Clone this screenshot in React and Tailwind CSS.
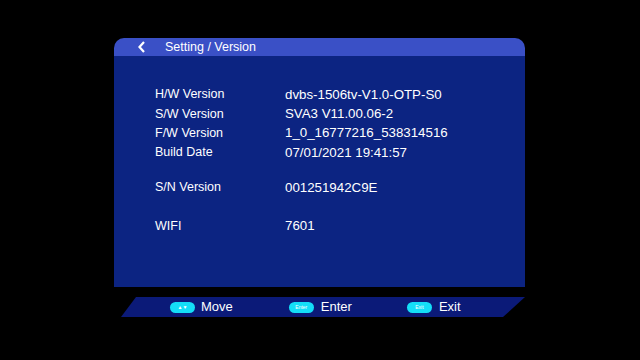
export default function App() {
  const rows = [
    ["H/W Version", "dvbs-1506tv-V1.0-OTP-S0", "mt-0"],
    ["S/W Version", "SVA3 V11.00.06-2", "mt-0"],
    ["F/W Version", "1_0_16777216_538314516", "mt-0"],
    ["Build Date", "07/01/2021 19:41:57", "mt-0"],
    ["S/N Version", "001251942C9E", "mt-[16px]"],
    ["WIFI", "7601", "mt-[19px]"],
  ];
  return (
    <div className="w-[640px] h-[360px] bg-black overflow-hidden relative" style={{ fontFamily: '"Liberation Sans", Arial, sans-serif' }}>
      <div className="absolute left-[114px] top-[38px] w-[411px] flex flex-col">
        <div className="h-[18px] bg-[#3a50c6] rounded-t-[10px] flex items-center">
          <svg width="10" height="14" viewBox="0 0 10 14" className="ml-[23px]">
            <path d="M7 2 L2.5 7 L7 12" stroke="white" strokeWidth="2.2" fill="none" />
          </svg>
          <span className="ml-[18px] text-white text-[12.5px] leading-none">Setting / Version</span>
        </div>
        <div className="h-[231px] bg-[#0c2482] pt-[29px] pl-[41px] text-white text-[12.5px]">
          {rows.map(([k, v, m]) => (
            <div key={k} className={`flex h-[19.3px] items-center ${m}`}>
              <span className="w-[130px]">{k}</span>
              <span className="text-[13.3px]">{v}</span>
            </div>
          ))}
        </div>
      </div>
      <div className="absolute left-[121px] top-[297px] w-[404px] h-[20px] bg-[#0b1a78] [clip-path:polygon(15px_0,404px_0,382px_100%,0_100%)] text-white text-[13px]">
        <div className="flex items-center h-full">
          <div className="ml-[49px] w-[25px] h-[11px] rounded-full bg-[#14def8] flex items-center justify-center text-white text-[5px] leading-none">▲▼</div>
          <span className="ml-[6px]">Move</span>
          <div className="ml-[56px] w-[25px] h-[11px] rounded-full bg-[#14def8] flex items-center justify-center text-white text-[5px] leading-none">Enter</div>
          <span className="ml-[7px]">Enter</span>
          <div className="ml-[55px] w-[25px] h-[11px] rounded-full bg-[#14def8] flex items-center justify-center text-white text-[5px] leading-none">Exit</div>
          <span className="ml-[7px]">Exit</span>
        </div>
      </div>
    </div>
  );
}
